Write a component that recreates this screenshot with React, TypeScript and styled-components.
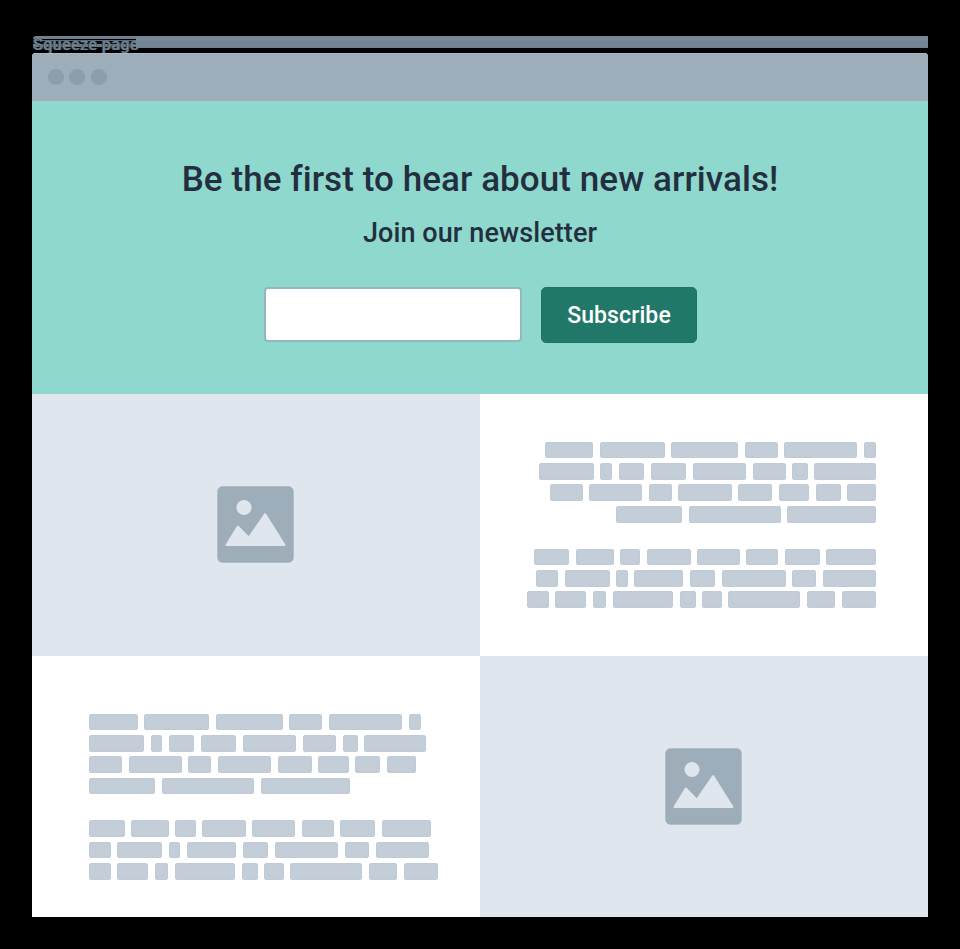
import React from "react";
import styled, { createGlobalStyle } from "styled-components";

const GlobalStyle = createGlobalStyle`
  * { box-sizing: border-box; }
  body { margin: 0; background: #000; }
`;

const Page = styled.main`
  width: 960px;
  height: 949px;
  padding: 36px 32px 32px;
  background: #000;
  font-family: Roboto, "Liberation Sans", sans-serif;
  overflow: hidden;
`;

const TitleStrip = styled.div`
  display: flex;
  height: 12px;
  margin-bottom: 5px;
  padding-left: 1px;
`;

const StripTitle = styled.span`
  width: 103px;
  height: 16px;
  flex: none;
  border-top: 3px solid #70808f;
  border-top-left-radius: 3px;
  color: #738492;
  font-size: 16px;
  font-weight: 400;
  line-height: 11px;
  letter-spacing: 0.5px;
  white-space: nowrap;
  background: linear-gradient(#000 0 1px, #5c6b78 1px 2px, #000 2px 5px, #6c7d8b 5px 8px, transparent 8px);
  text-shadow: 1px 0 #53616d, -1px 0 #34404b;
`;

const StripFill = styled.div`
  flex: 1;
  background: linear-gradient(#718392, #788b95 30%, #718394 50%, #768895 75%, #708293);
`;

const Browser = styled.div`
  height: 864px;
  border-radius: 4px 4px 0 0;
  overflow: hidden;
  background: #fff;
`;

const Toolbar = styled.header`
  display: flex;
  align-items: center;
  gap: 5.3px;
  height: 48px;
  padding-left: 16px;
  background: #9eadba;
  box-shadow: inset 0 1px #aab8c7;
`;

const WindowDot = styled.i`
  width: 16px;
  height: 16px;
  border-radius: 50%;
  background: #8d9dac;
`;

const Hero = styled.section`
  display: flex;
  flex-direction: column;
  align-items: center;
  height: 293px;
  padding-top: 58px;
  background: #8fd8ce;
  color: #232f3e;
`;

const Heading = styled.h1`
  margin: 0;
  font-size: 35px;
  font-weight: 500;
  line-height: 42px;
  letter-spacing: 0.07px;
  white-space: nowrap;
`;

const Subheading = styled.p`
  margin: 16px 0 0;
  font-size: 27px;
  font-weight: 500;
  line-height: 32px;
  letter-spacing: 0.1px;
  white-space: nowrap;
`;

const Form = styled.form`
  display: flex;
  align-items: center;
  gap: 19px;
  height: 56px;
  margin: 37px 0 0 1px;
`;

const EmailField = styled.input`
  width: 258px;
  height: 55px;
  margin-top: 1px;
  padding: 0 16px;
  border: 2.5px solid #94b7bf;
  border-radius: 4px;
  background: #fff;
  outline: none;
`;

const SubscribeButton = styled.button`
  width: 156px;
  height: 56px;
  margin-top: 1px;
  padding: 1px 0 0;
  border: 1px solid #1b7464;
  border-radius: 5px;
  background: #217868;
  color: #fff;
  font: 500 23px/53px Roboto, "Liberation Sans", sans-serif;
  letter-spacing: 0.1px;
`;

const Content = styled.section`
  display: grid;
  grid-template-columns: 448px 448px;
  grid-template-rows: 262px 261px;
`;

const ImagePanel = styled.div`
  display: flex;
  justify-content: center;
  padding: 92px 2px 0 0;
  background: #dfe6ee;
`;

const Picture = styled.svg`
  width: 77px;
  height: 77px;
  display: block;
`;

const TextPanel = styled.div<{ $end?: boolean }>`
  display: flex;
  flex-direction: column;
  align-items: ${(p) => (p.$end ? "flex-end" : "flex-start")};
  gap: 26px;
  padding: ${(p) => (p.$end ? "47.7px 52px 0 0" : "57.5px 0 0 57.2px")};
  background: #fff;
`;

const Paragraph = styled.div<{ $end?: boolean }>`
  display: flex;
  flex-direction: column;
  align-items: ${(p) => (p.$end ? "flex-end" : "flex-start")};
  gap: 4.7px;
`;

const Line = styled.div`
  display: flex;
  gap: 6.6px;
`;

const Word = styled.span<{ $width: number }>`
  width: ${(p) => p.$width}px;
  height: 16.7px;
  border: 1px solid #bfccd7;
  border-radius: 2px;
  background: #c3ced8;
`;

const paragraphs = [
  [
    [48.7, 64.7, 66.9, 32.9, 73.2, 12],
    [54.8, 11.8, 25.5, 35.2, 53.5, 33, 15.3, 61.8],
    [33.1, 52.9, 23.1, 53.2, 34, 30.1, 25.2, 28.7],
    [66.3, 92.1, 88.8],
  ],
  [
    [35.4, 37.5, 20.3, 43.6, 42.6, 32, 34.8, 49.6],
    [21.7, 45, 11.3, 49.3, 25.3, 63.7, 24, 53.2],
    [21.7, 31, 13, 60.8, 15.8, 19.2, 72, 28.5, 34.2],
  ],
];

function Copy({ end = false }: { end?: boolean }) {
  return (
    <TextPanel $end={end}>
      {paragraphs.map((lines, p) => (
        <Paragraph key={p} $end={end}>
          {lines.map((words, l) => (
            <Line key={l}>
              {words.map((width, w) => (
                <Word key={w} $width={width} />
              ))}
            </Line>
          ))}
        </Paragraph>
      ))}
    </TextPanel>
  );
}

function ImagePlaceholder() {
  return (
    <ImagePanel>
      <Picture viewBox="0 0 77 77" aria-hidden="true">
        <rect x="0.8" y="0.8" width="75.4" height="75.4" rx="4.5" fill="#9eadba" stroke="#98a9b7" strokeWidth="0.8" />
        <circle cx="27" cy="21.5" r="7.5" fill="#dfe6ee" />
        <path d="M9.5 59 20.8 40.5 31.8 51.8 48.1 28 67.5 59Z" fill="#dfe6ee" stroke="#dfe6ee" strokeWidth="2" strokeLinejoin="round" />
      </Picture>
    </ImagePanel>
  );
}

export default function App() {
  return (
    <>
      <GlobalStyle />
      <Page>
        <TitleStrip>
          <StripTitle>Squeeze page</StripTitle>
          <StripFill />
        </TitleStrip>
        <Browser>
          <Toolbar>
            <WindowDot />
            <WindowDot />
            <WindowDot />
          </Toolbar>
          <Hero>
            <Heading>Be the first to hear about new arrivals!</Heading>
            <Subheading>Join our newsletter</Subheading>
            <Form onSubmit={(event) => event.preventDefault()}>
              <EmailField type="email" aria-label="Email" />
              <SubscribeButton type="submit">Subscribe</SubscribeButton>
            </Form>
          </Hero>
          <Content>
            <ImagePlaceholder />
            <Copy end />
            <Copy />
            <ImagePlaceholder />
          </Content>
        </Browser>
      </Page>
    </>
  );
}
